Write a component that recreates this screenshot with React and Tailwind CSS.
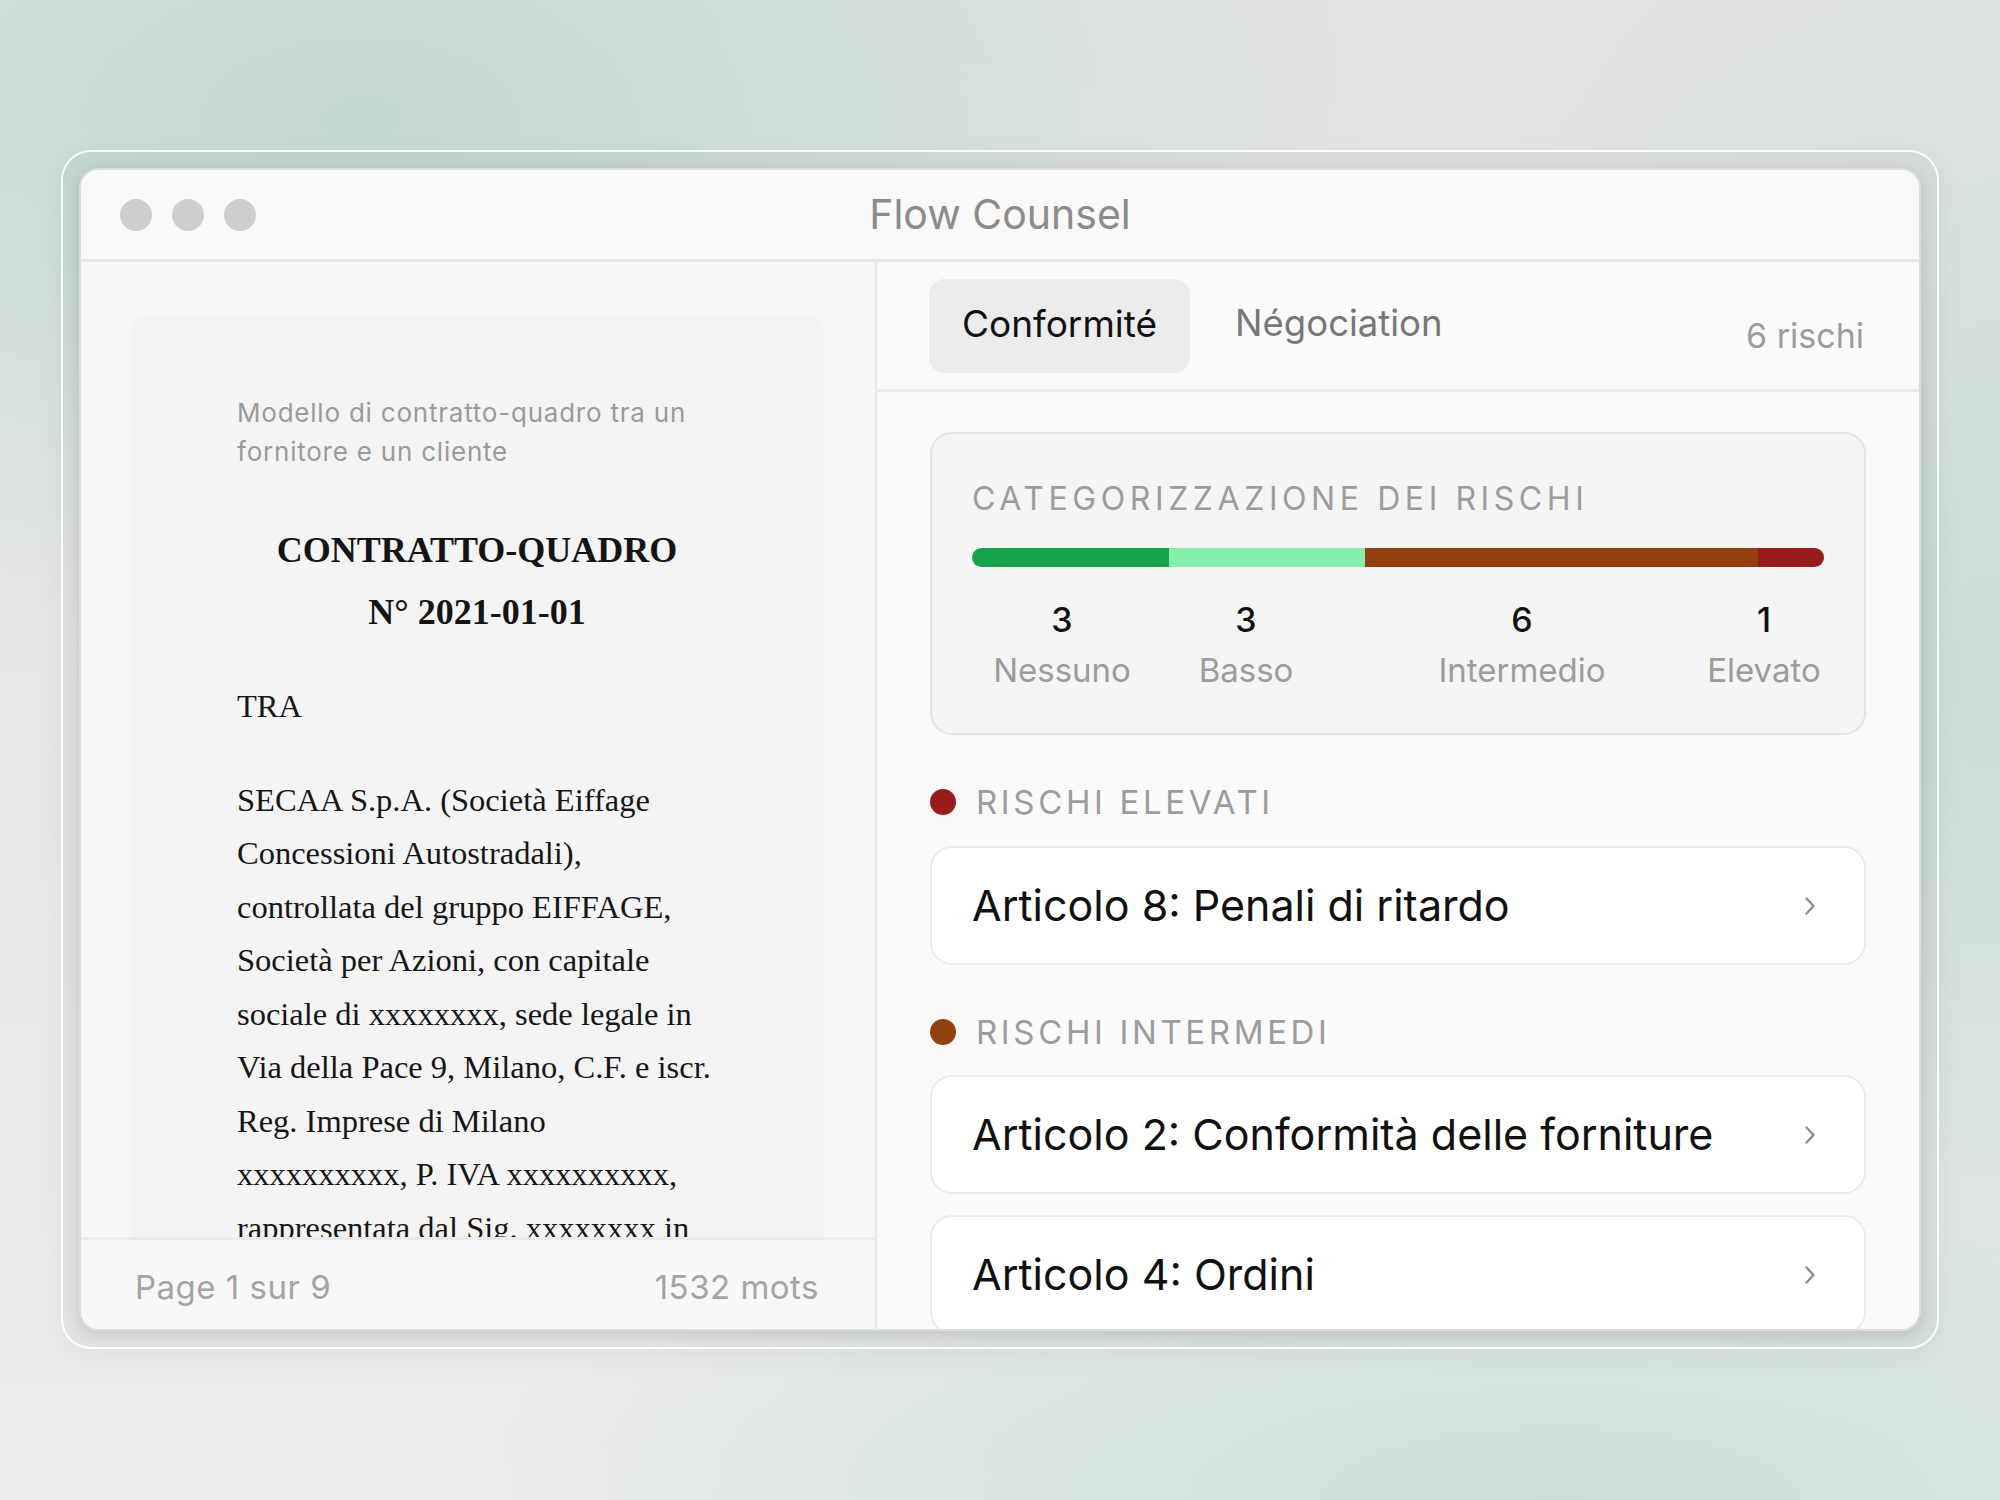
import React from 'react';

const SANS = "font-['Inter','Liberation_Sans',sans-serif]";

const BODY_LINES = [
  'SECAA S.p.A. (Società Eiffage',
  'Concessioni Autostradali),',
  'controllata del gruppo EIFFAGE,',
  'Società per Azioni, con capitale',
  'sociale di xxxxxxxx, sede legale in',
  'Via della Pace 9, Milano, C.F. e iscr.',
  'Reg. Imprese di Milano',
  'xxxxxxxxxx, P. IVA xxxxxxxxxx,',
  'rappresentata dal Sig. xxxxxxxx in',
];

// risk buckets: count drives the bar segment width
const RISK_BUCKETS = [
  { label: 'Nessuno', count: 3, color: 'bg-[#16a34a]', col: 'w-[180px]' },
  { label: 'Basso', count: 3, color: 'bg-[#86efac]', col: 'w-[188px]' },
  { label: 'Intermedio', count: 6, color: 'bg-[#92400e]', col: 'w-[364px]' },
  { label: 'Elevato', count: 1, color: 'bg-[#991b1b]', col: 'w-[120px]' },
];

const TOTAL = RISK_BUCKETS.reduce((s, b) => s + b.count, 0);

const Chevron = () => (
  <svg width="12" height="20" viewBox="0 0 12 20" fill="none" className="shrink-0">
    <path d="M2.5 2.5 L9.5 10 L2.5 17.5" stroke="#8e8e8e" strokeWidth="2.4" strokeLinecap="round" strokeLinejoin="round" />
  </svg>
);

const RiskCard = ({ title }) => (
  <div className="flex h-[119px] items-center justify-between rounded-[22px] border-2 border-[#ececec] bg-white pl-[40px] pr-[48px]">
    <span className="text-[43px] leading-none text-[#111]">{title}</span>
    <Chevron />
  </div>
);

const SectionHeader = ({ dot, children }) => (
  <div className="flex h-[40px] items-center gap-[20px]">
    <span className={`h-[26px] w-[26px] rounded-full ${dot}`} />
    <span className="text-[33px] leading-none tracking-[0.11em] text-[#9c9c9c]">{children}</span>
  </div>
);

const DocumentPage = () => (
  <div className="w-[690px] rounded-[16px] bg-[#f4f4f4] pl-[105px] pr-[40px] pt-[78px] pb-[60px] shadow-[0_1px_6px_rgba(0,0,0,0.03)]">
    <p className={`${SANS} text-[26px] leading-[39px] tracking-[0.03em] text-[#9a9a9a]`}>
      Modello di contratto-quadro tra un
      <br />
      fornitore e un cliente
    </p>
    <div className="mt-[48px] -ml-[65px] text-center font-['Liberation_Serif','Times_New_Roman',serif] text-[36px] font-bold leading-[62px] text-[#141414]">
      <div>CONTRATTO-QUADRO</div>
      <div>N° 2021-01-01</div>
    </div>
    <div className="font-['Liberation_Serif','Times_New_Roman',serif] text-[32.5px] leading-[53.5px] text-[#161616]">
      <p className="mt-[37px]">TRA</p>
      <div className="mt-[40px] whitespace-nowrap">
        {BODY_LINES.map((line) => (
          <div key={line}>{line}</div>
        ))}
      </div>
    </div>
  </div>
);

export default function App() {
  return (
    <div
      className={`${SANS} h-[1500px] w-[2000px] overflow-hidden bg-[#e4e4e4] bg-[image:radial-gradient(ellipse_1000px_520px_at_18%_8%,#c2d9d0,transparent),radial-gradient(ellipse_650px_800px_at_100%_45%,#cadcd5,transparent),radial-gradient(ellipse_1100px_330px_at_78%_100%,#cadfd7,transparent),linear-gradient(180deg,#e2e3e2,#ececec)] pl-[61px] pt-[150px]`}
    >
      {/* glass frame around the app window */}
      <div className="h-[1199px] w-[1878px] rounded-[30px] border-2 border-white/90 bg-black/[0.035] p-[16px] shadow-[0_8px_30px_rgba(0,0,0,0.05)]">
        <div className="flex h-full w-full flex-col overflow-hidden rounded-[20px] border-2 border-[#dddddd] bg-[#fafafa] shadow-[0_4px_14px_rgba(0,0,0,0.12)]">
          {/* title bar */}
          <div className="grid h-[92px] shrink-0 grid-cols-[1fr_auto_1fr] items-center border-b-[3px] border-[#e7e7e7] bg-[#f9f9f9] px-[39px]">
            <div className="flex gap-[20px]">
              <span className="h-[32px] w-[32px] rounded-full bg-[#cecece]" />
              <span className="h-[32px] w-[32px] rounded-full bg-[#cecece]" />
              <span className="h-[32px] w-[32px] rounded-full bg-[#cecece]" />
            </div>
            <div className="text-[41px] leading-none text-[#8b8b8b]">Flow Counsel</div>
            <div />
          </div>

          <div className="flex min-h-0 flex-1">
            {/* document side */}
            <div className="flex w-[796px] shrink-0 flex-col border-r-2 border-[#e9e9e9] bg-[#f8f8f8]">
              <div className="min-h-0 flex-1 overflow-hidden pl-[51px] pt-[53px]">
                <DocumentPage />
              </div>
              <div className="flex h-[92px] shrink-0 items-center justify-between border-t-[3px] border-[#ebebeb] bg-[#f8f8f8] pl-[54px] pr-[56px] pt-[6px] text-[33px] tracking-[0.015em] text-[#a4a4a4]">
                <span>Page 1 sur 9</span>
                <span>1532 mots</span>
              </div>
            </div>

            {/* analysis side */}
            <div className="flex min-w-0 flex-1 flex-col bg-[#fafafa]">
              <div className="flex h-[130px] shrink-0 items-start border-b-[3px] border-[#ebebeb] pl-[52px] pr-[55px] pt-[17px]">
                <div className="flex gap-[13px]">
                  <div className="flex h-[94px] items-center rounded-[16px] bg-[#ececec] px-[33px] pb-[5px] text-[37px] text-[#111]">
                    Conformité
                  </div>
                  <div className="flex h-[94px] items-center px-[32px] pb-[5px] text-[36.5px] text-[#777]">
                    Négociation
                  </div>
                </div>
                <div className="ml-auto pt-[40px] text-[34px] leading-none text-[#9c9c9c]">6 rischi</div>
              </div>

              <div className="min-h-0 flex-1 overflow-hidden px-[53px] pt-[40px]">
                <div className="h-[303px] rounded-[22px] border-2 border-[#e5e5e5] bg-[#f5f5f5] px-[40px] pt-[45px]">
                  <div className="text-[32px] leading-[40px] tracking-[0.143em] text-[#9c9c9c]">
                    CATEGORIZZAZIONE DEI RISCHI
                  </div>
                  <div className="mt-[29px] flex h-[19px] w-[852px] overflow-hidden rounded-full">
                    {RISK_BUCKETS.map((b) => (
                      <div key={b.label} className={`h-full ${b.color}`} style={{ width: `${(b.count / TOTAL) * 100}%` }} />
                    ))}
                  </div>
                  <div className="mt-[33px] flex">
                    {RISK_BUCKETS.map((b) => (
                      <div key={b.label} className={`${b.col} flex flex-col items-center`}>
                        <span className="text-[34px] font-medium leading-[40px] text-[#111]">{b.count}</span>
                        <span className="mt-[10px] whitespace-nowrap text-[33px] leading-[40px] text-[#9c9c9c]">{b.label}</span>
                      </div>
                    ))}
                  </div>
                </div>

                <div className="mt-[47px]">
                  <SectionHeader dot="bg-[#991b1b]">RISCHI ELEVATI</SectionHeader>
                </div>
                <div className="mt-[24px]">
                  <RiskCard title="Articolo 8: Penali di ritardo" />
                </div>

                <div className="mt-[47px]">
                  <SectionHeader dot="bg-[#92400e]">RISCHI INTERMEDI</SectionHeader>
                </div>
                <div className="mt-[23px] flex flex-col gap-[21px]">
                  <RiskCard title="Articolo 2: Conformità delle forniture" />
                  <RiskCard title="Articolo 4: Ordini" />
                </div>
              </div>
            </div>
          </div>
        </div>
      </div>
    </div>
  );
}
